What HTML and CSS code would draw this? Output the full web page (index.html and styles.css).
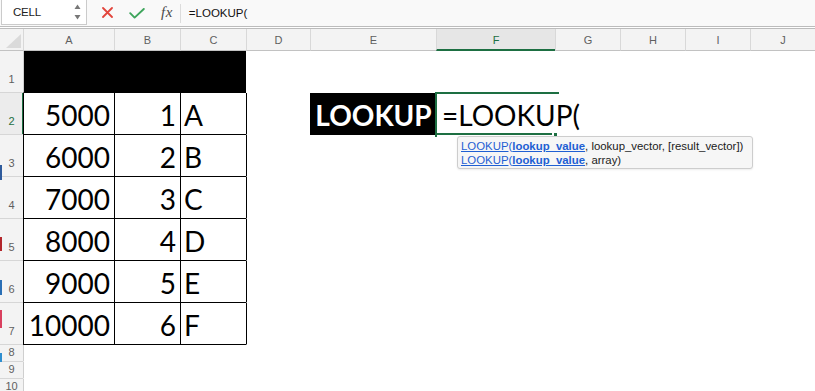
FILE: index.html
```html
<!DOCTYPE html>
<html lang="en">
<head>
<meta charset="utf-8">
<title>LOOKUP</title>
<link rel="stylesheet" href="styles.css">
</head>
<body>
<div class="app">
  <div class="toolbar">
    <div class="namebox">
      <span class="nb-text">CELL</span>
      <svg class="spin" width="7" height="16" viewBox="0 0 7 16"><path d="M3.5 0.5 L6.5 5 L0.5 5 Z" fill="#777"/><path d="M0.5 11 L6.5 11 L3.5 15.5 Z" fill="#777"/></svg>
    </div>
    <svg class="ic-x" width="11" height="11" viewBox="0 0 11 11"><path d="M1 1 L10 10 M10 1 L1 10" stroke="#e2453c" stroke-width="1.8" stroke-linecap="round"/></svg>
    <svg class="ic-ok" width="16" height="11" viewBox="0 0 16 11"><path d="M1.2 5.2 L5.6 9.6 L14.8 1" stroke="#3ea55c" stroke-width="1.9" fill="none" stroke-linecap="round" stroke-linejoin="round"/></svg>
    <span class="fx">fx</span>
    <span class="fsep"></span>
    <span class="ftext">=LOOKUP(</span>
  </div>

  <div class="sheet">
    <div class="row hdr">
      <div class="corner"><svg width="15" height="14" viewBox="0 0 15 14"><path d="M15 0 L15 14 L0 14 Z" fill="#dadada"/></svg></div>
      <div class="ch">A</div><div class="ch">B</div><div class="ch">C</div><div class="ch">D</div><div class="ch">E</div>
      <div class="ch ch-sel">F</div><div class="ch">G</div><div class="ch">H</div><div class="ch">I</div><div class="ch">J</div>
    </div>

    <div class="row big">
      <div class="rh">1</div>
      <div class="c a blk"></div><div class="c blk"></div><div class="c blk"></div>
      <div class="c"></div><div class="c"></div><div class="c"></div><div class="c"></div><div class="c"></div><div class="c"></div><div class="c"></div>
    </div>

    <div class="row big">
      <div class="rh rh-sel">2</div>
      <div class="c a t num">5000</div><div class="c t num">1</div><div class="c t txt">A</div>
      <div class="c tr"></div>
      <div class="c hl">LOOKUP</div>
      <div class="c edit"><span class="edit-text">=LOOKUP(</span><span class="sel-bottom"></span><span class="handle"></span></div>
      <div class="c"></div><div class="c"></div><div class="c"></div><div class="c"></div>
    </div>

    <div class="row big">
      <div class="rh">3</div>
      <div class="c a t num">6000</div><div class="c t num">2</div><div class="c t txt">B</div>
      <div class="c tr"></div><div class="c"></div><div class="c"></div><div class="c"></div><div class="c"></div><div class="c"></div><div class="c"></div>
    </div>

    <div class="row big">
      <div class="rh">4</div>
      <div class="c a t num">7000</div><div class="c t num">3</div><div class="c t txt">C</div>
      <div class="c tr"></div><div class="c"></div><div class="c"></div><div class="c"></div><div class="c"></div><div class="c"></div><div class="c"></div>
    </div>

    <div class="row big">
      <div class="rh">5</div>
      <div class="c a t num">8000</div><div class="c t num">4</div><div class="c t txt">D</div>
      <div class="c tr"></div><div class="c"></div><div class="c"></div><div class="c"></div><div class="c"></div><div class="c"></div><div class="c"></div>
    </div>

    <div class="row big">
      <div class="rh">6</div>
      <div class="c a t num">9000</div><div class="c t num">5</div><div class="c t txt">E</div>
      <div class="c tr"></div><div class="c"></div><div class="c"></div><div class="c"></div><div class="c"></div><div class="c"></div><div class="c"></div>
    </div>

    <div class="row big">
      <div class="rh">7</div>
      <div class="c a t num">10000</div><div class="c t num">6</div><div class="c t txt">F</div>
      <div class="c tr"></div><div class="c"></div><div class="c"></div><div class="c"></div><div class="c"></div><div class="c"></div><div class="c"></div>
    </div>

    <div class="row small">
      <div class="rh">8</div>
      <div class="c a"></div><div class="c"></div><div class="c"></div><div class="c"></div><div class="c"></div><div class="c"></div><div class="c"></div><div class="c"></div><div class="c"></div><div class="c"></div>
    </div>
    <div class="row small">
      <div class="rh">9</div>
      <div class="c a"></div><div class="c"></div><div class="c"></div><div class="c"></div><div class="c"></div><div class="c"></div><div class="c"></div><div class="c"></div><div class="c"></div><div class="c"></div>
    </div>
    <div class="row small">
      <div class="rh">10</div>
      <div class="c a"></div><div class="c"></div><div class="c"></div><div class="c"></div><div class="c"></div><div class="c"></div><div class="c"></div><div class="c"></div><div class="c"></div><div class="c"></div>
    </div>

    <div class="tip">
      <div class="tip-line"><span class="lk">LOOKUP</span><span class="par">(</span><span class="lk b">lookup_value</span>, lookup_vector, [result_vector])</div>
      <div class="tip-line"><span class="lk">LOOKUP</span><span class="par">(</span><span class="lk b">lookup_value</span>, array)</div>
    </div>

    <div class="edge">
      <span class="e1"></span><span class="e2"></span><span class="e3"></span><span class="e4"></span><span class="e5"></span>
    </div>
  </div>
</div>
</body>
</html>
```

FILE: styles.css
```css
* { box-sizing: border-box; }

html, body {
  margin: 0;
  padding: 0;
  background: #ffffff;
}

.app {
  width: 815px;
  height: 391px;
  overflow: hidden;
  position: relative;
  font-family: "Liberation Sans", Arial, sans-serif;
}

/* ---------- formula toolbar ---------- */
.toolbar {
  height: 27px;
  background: #f9f9f9;
  border-bottom: 1px solid #bcbcbc;
  display: flex;
  align-items: center;
}

.namebox {
  align-self: flex-start;
  margin-left: 1px;
  width: 86px;
  height: 25px;
  background: #ffffff;
  border: 1px solid #cbcbcb;
  border-top: none;
  display: flex;
  align-items: center;
  justify-content: space-between;
  padding: 0 5px 0 11px;
}

.nb-text {
  font-size: 11.5px;
  color: #222;
  letter-spacing: -0.2px;
}

.spin { display: block; margin-top: -1px; }

.ic-x { margin-left: 15px; margin-top: -1px; }
.ic-ok { margin-left: 16px; margin-top: 0; }

.fx {
  margin-left: 16px;
  font-family: "Liberation Serif", "Times New Roman", serif;
  font-style: italic;
  font-size: 15px;
  color: #4a4a4a;
  letter-spacing: 0.5px;
  margin-top: -2px;
}

.fsep {
  margin-left: 7px;
  width: 1px;
  height: 19px;
  background: #dcdcdc;
}

.ftext {
  margin-left: 8px;
  font-size: 11.5px;
  color: #111;
}

/* ---------- sheet ---------- */
.sheet {
  margin-top: 1px;
  border-top: 1px solid #bcbcbc;
  position: relative;
}

.row {
  display: grid;
  grid-template-columns: 23px 91px 66px 66px 64px 126px 119px 65px 65px 65px 1fr;
}

.hdr { height: 22px; }
.big { height: 42px; }
.small { height: 17px; }

.corner, .ch {
  background: #f3f3f3;
  border-bottom: 1px solid #c2c2c2;
}

.corner {
  display: flex;
  align-items: flex-end;
  justify-content: flex-end;
  padding: 0 2px 2px 0;
}
.corner svg { display: block; }

.ch {
  border-left: 1px solid #d8d8d8;
  display: flex;
  align-items: center;
  justify-content: center;
  font-size: 11px;
  color: #5f5f5f;
  padding-top: 1px;
}

.ch-sel {
  background: #e6e6e6;
  color: #1d6f42;
  border-bottom: 2px solid #1d6f42;
  padding-top: 2px;
}

.rh {
  background: #f3f3f3;
  border-bottom: 1px solid #d6d6d6;
  display: flex;
  align-items: flex-end;
  justify-content: center;
  font-size: 11px;
  line-height: 13px;
  color: #5f5f5f;
  padding-bottom: 6px;
}

.small .rh {
  padding-bottom: 3px;
  line-height: 12px;
}

.rh-sel {
  color: #1d6f42;
  background: #ececec;
  box-shadow: inset -1px 0 0 #1d6f42;
}

.c {
  border-left: 1px solid transparent;
  border-bottom: 1px solid transparent;
  font-family: Lato, "Open Sans", sans-serif;
  font-size: 28px;
  line-height: 28px;
  color: #000;
  display: flex;
  align-items: flex-end;
  padding-bottom: 5px;
  white-space: nowrap;
}

.a { border-left-color: #cfcfcf; }

.blk {
  background: #000;
  border-bottom-color: #000;
}

.t {
  border-left-color: #000;
  border-bottom-color: #000;
}

.tr { border-left-color: #000; }

.num {
  justify-content: flex-end;
  padding-right: 4px;
}

.txt { padding-left: 3px; }

.hl {
  background: #000;
  border-bottom-color: #000;
  color: #fff;
  font-weight: 700;
  justify-content: center;
}

.edit {
  position: relative;
  padding-left: 5px;
  overflow: visible;
}

.edit::before {
  content: "";
  position: absolute;
  left: -2px;
  top: -1px;
  width: 122px;
  height: 43px;
  border-top: 2px solid #1d6f42;
  border-left: 2px solid #1d6f42;
}

.edit-text { position: relative; }

.sel-bottom {
  position: absolute;
  left: -2px;
  top: 40px;
  width: 117px;
  height: 2px;
  background: #1d6f42;
}

.handle {
  position: absolute;
  left: 116px;
  top: 39px;
  width: 5px;
  height: 5px;
  background: #1d6f42;
  border: 1px solid #fff;
}

/* ---------- function tooltip ---------- */
.tip {
  position: absolute;
  left: 457px;
  top: 107px;
  width: 296px;
  height: 33px;
  background: #f6f6f6;
  border: 1px solid #cdcdcd;
  border-radius: 3px;
  box-shadow: 0 1px 2px rgba(0,0,0,0.08);
  padding: 3px 0 0 3px;
  font-family: "Liberation Sans", Arial, sans-serif;
  font-size: 11.4px;
  line-height: 13.5px;
  color: #1b1b1b;
  white-space: nowrap;
}

.lk {
  color: #1f5fd3;
  text-decoration: underline;
}
.lk.b { font-weight: 700; }
.par { color: #1f5fd3; }

/* ---------- left edge artifacts ---------- */
.edge {
  position: absolute;
  left: 0;
  top: 0;
  width: 2px;
  height: 340px;
}
.edge span {
  position: absolute;
  left: 0;
  width: 2px;
}
.e1 { top: 136px; height: 15px; background: #2f5b9c; }
.e2 { top: 208px; height: 14px; background: #b3262b; }
.e3 { top: 251px; height: 15px; background: #2a6fb5; }
.e4 { top: 281px; height: 18px; background: #d9405e; }
.e5 { top: 324px; height: 9px; background: #2f8fd0; }
```
